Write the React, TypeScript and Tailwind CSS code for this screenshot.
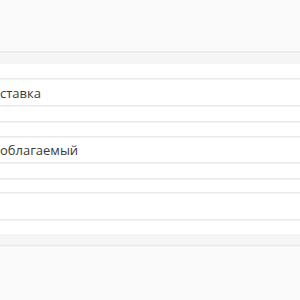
const font = { fontFamily: '"Open Sans", "Noto Sans", sans-serif' };

function Row({ h, text }: { h: string; text?: string }) {
  return (
    <div className={`flex items-center border-t border-[#e8e8e8] bg-white pt-[3px] shadow-[inset_0_1px_0_#f4f4f4] ${h}`}>
      {text && <span className="whitespace-nowrap text-[13px] text-[#3a3a3a]">{text}</span>}
    </div>
  );
}

export default function App() {
  return (
    <div className="h-[300px] w-[300px] overflow-hidden bg-[#fafafa]" style={font}>
      <div className="h-[51px]" />
      <div className="h-[13px] border-t border-[#e8e8e8] bg-[#f5f5f5] shadow-[inset_0_1px_0_#efefef]" />
      <div className="h-[14px] bg-white" />
      <Row h="h-[27px]" text="ставка" />
      <Row h="h-[16px]" />
      <Row h="h-[15px]" />
      <Row h="h-[26px]" text="облагаемый" />
      <Row h="h-[16px]" />
      <Row h="h-[14px]" />
      <Row h="h-[27px]" />
      <Row h="h-[15px]" />
      <div className="h-[11px] bg-[#f5f5f5]" />
      <div className="h-[55px] border-t border-[#e8e8e8] bg-[#fafafa] shadow-[inset_0_1px_0_#f1f1f1]" />
    </div>
  );
}
